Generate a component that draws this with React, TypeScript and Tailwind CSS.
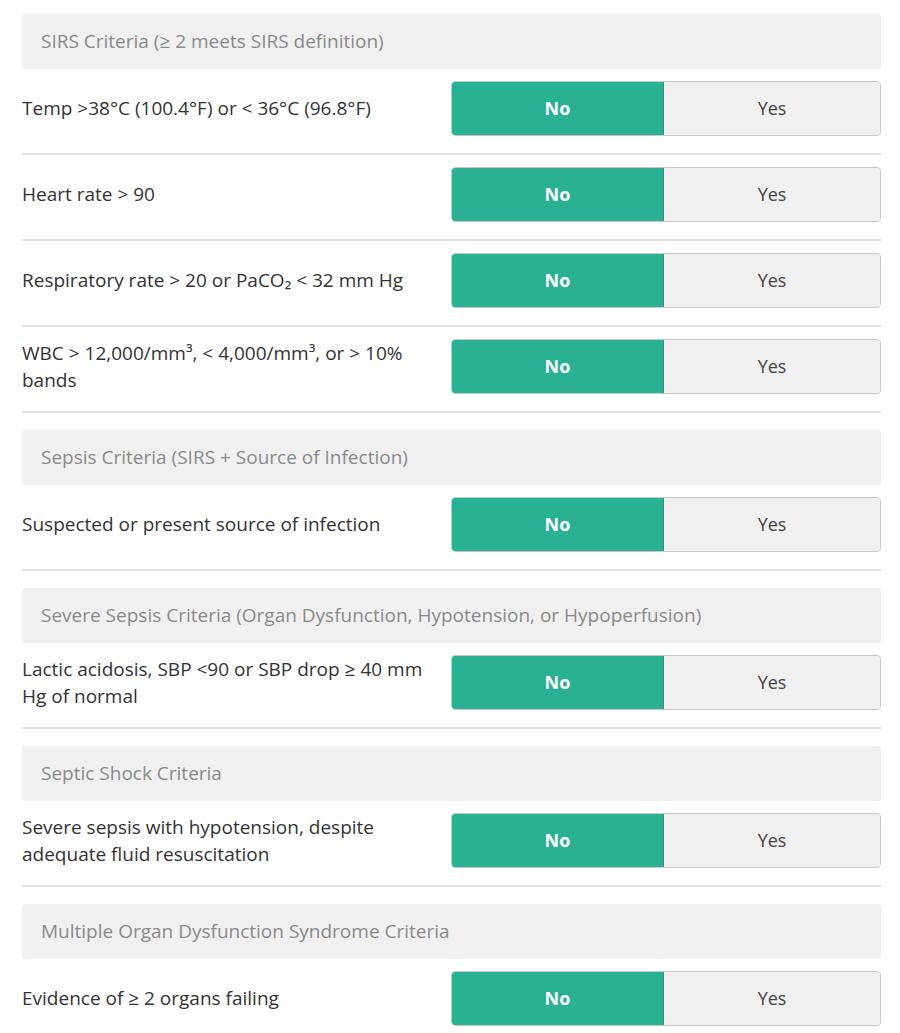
import React from "react";

type Section = {
  title: string;
  rows: string[];
};

const sections: Section[] = [
  {
    title: "SIRS Criteria (≥ 2 meets SIRS definition)",
    rows: [
      "Temp >38°C (100.4°F) or < 36°C (96.8°F)",
      "Heart rate > 90",
      "Respiratory rate > 20 or PaCO₂ < 32 mm Hg",
      "WBC > 12,000/mm³, < 4,000/mm³, or > 10% bands",
    ],
  },
  {
    title: "Sepsis Criteria (SIRS + Source of Infection)",
    rows: ["Suspected or present source of infection"],
  },
  {
    title:
      "Severe Sepsis Criteria (Organ Dysfunction, Hypotension, or Hypoperfusion)",
    rows: ["Lactic acidosis, SBP <90 or SBP drop ≥ 40 mm Hg of normal"],
  },
  {
    title: "Septic Shock Criteria",
    rows: ["Severe sepsis with hypotension, despite adequate fluid resuscitation"],
  },
  {
    title: "Multiple Organ Dysfunction Syndrome Criteria",
    rows: ["Evidence of ≥ 2 organs failing"],
  },
];

function Toggle() {
  return (
    <div className="flex h-[55px] w-[430px] shrink-0 overflow-hidden rounded-[4px] border border-[#c8c8c8]">
      <button className="w-[212px] border-r border-[#1f9b7c] bg-[#2ab092] text-[18px] font-bold text-white">
        No
      </button>
      <button className="flex-1 bg-[#f0f0f0] text-[18px] text-[#444]">
        Yes
      </button>
    </div>
  );
}

export default function App() {
  return (
    <div
      className="min-h-screen bg-white px-[22px] pt-[14px] pb-6 text-[#333]"
      style={{ fontFamily: '"Open Sans", "Noto Sans", sans-serif' }}
    >
      <div className="w-[859px]">
        {sections.map((section, i) => (
          <section key={i} className={i > 0 ? "mt-[17px]" : ""}>
            <div className="flex h-[55px] items-center rounded-[3px] bg-[#f0f0f0] px-[19px] text-[19px] text-[#8a8a8a]">
              {section.title}
            </div>
            {section.rows.map((row, j) => (
              <div
                key={j}
                className="flex items-center justify-between border-b-2 border-[#e2e2e2] pt-3 pb-[17px]"
              >
                <div className="w-[420px] text-[19px] leading-[27px]">
                  {row}
                </div>
                <Toggle />
              </div>
            ))}
          </section>
        ))}
      </div>
    </div>
  );
}
